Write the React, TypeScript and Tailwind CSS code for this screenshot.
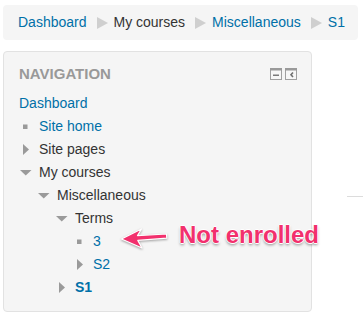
import React from "react";

const FONT = { fontFamily: '"Liberation Sans", Arial, Helvetica, sans-serif' };

function BcSep() {
  return (
    <svg width="11" height="12" viewBox="0 0 11 12" className="ml-[10px] mr-[6px] shrink-0">
      <polygon points="0,0 11,6 0,12" fill="#cfcfcf" />
    </svg>
  );
}

type Icon = "none" | "leaf" | "closed" | "open";

function TreeIcon({ kind }: { kind: Icon }) {
  return (
    <svg width="16" height="23" viewBox="0 0 16 23" className="shrink-0">
      {kind === "leaf" && <rect x="4" y="9.5" width="4.5" height="4.5" fill="#9a9a9a" />}
      {kind === "closed" && <polygon points="4,6 10,11.5 4,17" fill="#9a9a9a" />}
      {kind === "open" && <polygon points="1,9 12.5,9 6.75,14.5" fill="#9a9a9a" />}
    </svg>
  );
}

function Row({
  level,
  icon,
  text,
  link,
  bold,
}: {
  level: number;
  icon: Icon;
  text: string;
  link?: boolean;
  bold?: boolean;
}) {
  const pad = level === 0 ? 0 : 18 * (level - 1);
  return (
    <div className="flex h-[23px] items-start" style={{ paddingLeft: pad }}>
      {level > 0 && <TreeIcon kind={icon} />}
      <span
        className={`${level > 0 ? "ml-[4px]" : ""} leading-[23px] text-[14px] whitespace-nowrap ${
          link ? "text-[#0070a8]" : "text-[#333333]"
        } ${bold ? "font-bold" : ""}`}
      >
        {text}
      </span>
    </div>
  );
}

function HeaderIcons() {
  return (
    <div className="flex gap-[3px] mt-[4px]">
      <svg width="12" height="12" viewBox="0 0 12 12">
        <rect x="0.5" y="0.5" width="11" height="11" fill="#f7f7f7" stroke="#a0a0a0" />
        <rect x="0" y="0" width="12" height="2.5" fill="#9a9a9a" />
        <rect x="3" y="6.5" width="6" height="1.5" fill="#7a7a7a" />
      </svg>
      <svg width="12" height="12" viewBox="0 0 12 12">
        <rect x="0.5" y="0.5" width="11" height="11" fill="#f7f7f7" stroke="#a0a0a0" />
        <rect x="0" y="0" width="12" height="2.5" fill="#9a9a9a" />
        <polyline points="8,4.5 6,6.8 8,9" fill="none" stroke="#6f6f6f" strokeWidth="1.6" />
      </svg>
    </div>
  );
}

export default function App() {
  return (
    <div className="relative w-[363px] h-[319px] bg-white overflow-hidden" style={FONT}>
      <div className="pt-[5px] pl-[3px]">
        <div className="flex items-center w-[355px] h-[35px] bg-[#f5f5f5] rounded-[4px] pl-[15px] text-[14px]">
          <span className="text-[#0070a8]">Dashboard</span>
          <BcSep />
          <span className="text-[#333333]">My courses</span>
          <BcSep />
          <span className="text-[#0070a8]">Miscellaneous</span>
          <BcSep />
          <span className="text-[#0070a8]">S1</span>
        </div>
      </div>

      <div className="ml-[3px] mt-[11px] w-[309px] h-[261px] bg-[#f5f5f5] border border-[#e2e2e2] rounded-[4px] pt-[12px] pl-[15px] pr-[14px]">
        <div className="flex justify-between h-[20px]">
          <span className="text-[15px] leading-[20px] font-bold text-[#999999]">NAVIGATION</span>
          <HeaderIcons />
        </div>
        <div className="mt-[8px]">
          <Row level={0} icon="none" text="Dashboard" link />
          <Row level={1} icon="leaf" text="Site home" link />
          <Row level={1} icon="closed" text="Site pages" />
          <Row level={1} icon="open" text="My courses" />
          <Row level={2} icon="open" text="Miscellaneous" />
          <Row level={3} icon="open" text="Terms" />
          <Row level={4} icon="leaf" text="3" link />
          <Row level={4} icon="closed" text="S2" link />
          <Row level={3} icon="closed" text="S1" link bold />
        </div>
      </div>

      {/* faint line behind at right */}
      <div className="absolute left-[347px] top-[196px] w-[16px] h-[1px] bg-[#dcdcdc]" />

      {/* annotation arrow */}
      <svg
        className="absolute left-[115px] top-[222px] drop-shadow-[0_1px_1px_rgba(0,0,0,0.35)]"
        width="60"
        height="32"
        viewBox="0 0 60 32"
      >
        <polygon
          points="6.5,17 26.5,7 22.5,13.6 51.5,12 51.8,16.2 22.8,18.4 27,26"
          fill="#f2306d"
          stroke="#ffffff"
          strokeWidth="1.2"
          strokeLinejoin="round"
        />
      </svg>

      <div
        className="absolute left-[179px] top-[223px] text-[24px] leading-[24px] font-bold text-[#f2306d] whitespace-nowrap [text-shadow:1px_0_0_#fff,-1px_0_0_#fff,0_1px_0_#fff,0_-1px_0_#fff,0_2px_3px_rgba(0,0,0,0.45)]"
      >
        Not enrolled
      </div>
    </div>
  );
}
